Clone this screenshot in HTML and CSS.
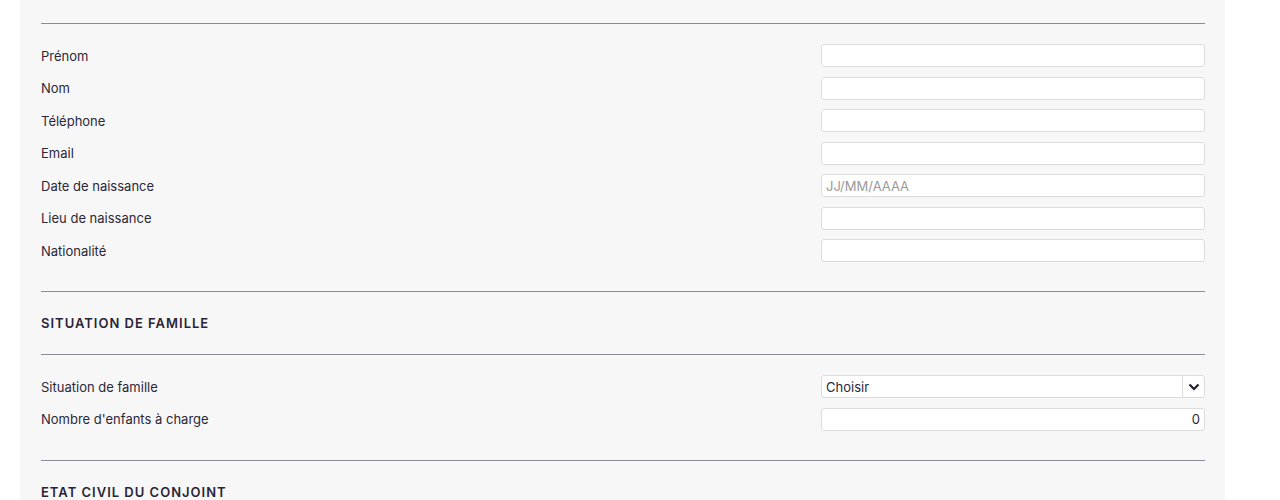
FILE: index.html
```html
<!DOCTYPE html>
<html>
<head>
  <title>Etat civil</title>
  <meta name="viewport" content="width=device-width, initial-scale=1">
  <link rel="stylesheet" href="styles.css">
</head>
<body>
  <div class="panel">
    <div class="divider"></div>
    <div class="fields">
      <label class="row"><span>Prénom</span><input type="text" class="field"></label>
      <label class="row"><span>Nom</span><input type="text" class="field"></label>
      <label class="row"><span>Téléphone</span><input type="text" class="field"></label>
      <label class="row"><span>Email</span><input type="text" class="field"></label>
      <label class="row"><span>Date de naissance</span><input type="text" class="field" placeholder="JJ/MM/AAAA"></label>
      <label class="row"><span>Lieu de naissance</span><input type="text" class="field"></label>
      <label class="row"><span>Nationalité</span><input type="text" class="field"></label>
    </div>

    <div class="divider"></div>
    <h3 class="section-title">SITUATION DE FAMILLE</h3>
    <div class="divider"></div>
    <div class="fields">
      <div class="row">
        <span>Situation de famille</span>
        <div class="field select">
          <span class="select-value">Choisir</span>
          <span class="select-arrow">
            <svg width="12" height="8" viewBox="0 0 12 8"><path d="M1.5 1.5 L6 6 L10.5 1.5" fill="none" stroke="#231d2e" stroke-width="2.2"/></svg>
          </span>
        </div>
      </div>
      <label class="row"><span>Nombre d'enfants à charge</span><input type="text" class="field num" value="0"></label>
    </div>

    <div class="divider"></div>
    <h3 class="section-title">ETAT CIVIL DU CONJOINT</h3>
    <div class="divider"></div>
  </div>
</body>
</html>
```

FILE: styles.css
```css
body { margin: 0; background: #fff; font-family: Inter, Roboto, "Liberation Sans", sans-serif; color: #2c2738; overflow: hidden; }
.panel { margin-left: 20px; width: 1164px; padding: 23px 20px 0 21px; background: #f7f7f7; min-height: 500px; }
.divider { border-top: 1px solid #8e8a99; }
.fields { padding: 20px 0 29px; }
.row { display: grid; grid-template-columns: 1fr 384px; align-items: center; height: 23px; margin-bottom: 9.5px; font-size: 13px; }
.row:last-child { margin-bottom: 0; }
.field { box-sizing: border-box; width: 384px; height: 23px; margin: 0; padding: 0 4px; background: #fff; border: 1px solid #dcdcdc; border-radius: 3px; font-family: Inter, Roboto, "Liberation Sans", sans-serif; font-size: 13px; color: #2c2738; outline: none; }
.field::placeholder { color: #9a9a9a; }
.num { text-align: right; }
.select { display: flex; align-items: stretch; padding: 0; }
.select-value { flex: 1; display: flex; align-items: center; padding-left: 4px; }
.select-arrow { width: 21px; display: flex; align-items: center; justify-content: center; border-left: 1px solid #dcdcdc; }
.section-title { margin: 0; padding: 23px 0; line-height: 16px; font-size: 13px; font-weight: 600; letter-spacing: 1px; color: #2a2437; }
```
